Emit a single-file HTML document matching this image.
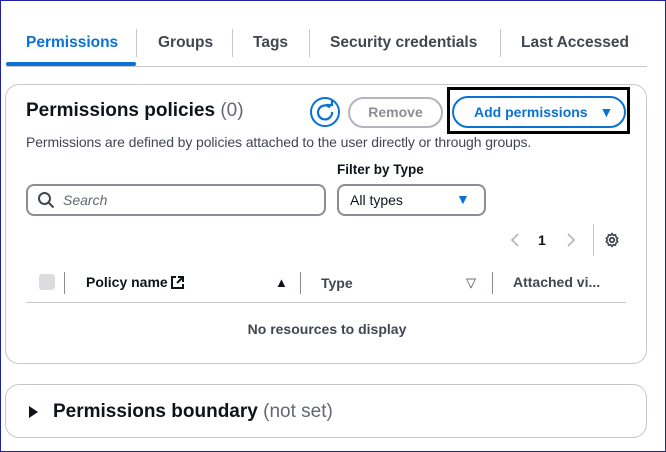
<!DOCTYPE html>
<html><head><style>
*{box-sizing:border-box;margin:0;padding:0}
body{width:666px;height:452px;position:relative;background:#fff;font-family:"Liberation Sans",sans-serif;color:#0f141a;overflow:hidden}
.a{position:absolute;white-space:nowrap}
.tab{font-size:15.5px;font-weight:bold;color:#424650;top:34px}
.sep{position:absolute;width:1px;background:#c6c6cd}
</style></head><body>
<div class="a" style="left:0;top:0;width:666px;height:452px;border:1px solid #2020a0"></div>
<div class="a tab" style="left:26px;color:#0972d3">Permissions</div>
<div class="a" style="left:6px;top:62px;width:130px;height:4px;background:#0972d3;border-radius:2px"></div>
<div class="sep" style="left:136px;top:29px;height:28px"></div>
<div class="a tab" style="left:158px">Groups</div>
<div class="sep" style="left:232px;top:29px;height:28px"></div>
<div class="a tab" style="left:253px">Tags</div>
<div class="sep" style="left:309px;top:29px;height:28px"></div>
<div class="a tab" style="left:330px">Security credentials</div>
<div class="sep" style="left:500px;top:29px;height:28px"></div>
<div class="a tab" style="left:521px">Last Accessed</div>
<div class="a" style="left:6px;top:66px;width:641px;height:1px;background:#c6c6cd"></div>

<div class="a" style="left:5px;top:84px;width:642px;height:280px;border:1px solid #c6c6cd;border-radius:14px"></div>
<div class="a" style="left:26px;top:100px;font-size:19px;font-weight:bold">Permissions policies <span style="font-weight:normal;color:#656871">(0)</span></div>
<svg class="a" style="left:309px;top:96px" width="32" height="32" viewBox="0 0 32 32"><circle cx="16" cy="16" r="14" fill="none" stroke="#0972d3" stroke-width="2"/><path d="M21 11.5A7 7 0 1 0 23 16" fill="none" stroke="#0972d3" stroke-width="2.2"/><path d="M17 9h6v-5" fill="none" stroke="#0972d3" stroke-width="2.2"/></svg>
<div class="a" style="left:348px;top:97px;width:95px;height:31px;border:2px solid #b4b4bb;border-radius:16px;font-size:14px;font-weight:bold;color:#8d8d94;text-align:center;line-height:27px">Remove</div>
<div class="a" style="left:447px;top:87px;width:183px;height:47px;border:3px solid #000"></div>
<div class="a" style="left:452px;top:96px;width:174px;height:32px;border:2px solid #0972d3;border-radius:16px;font-size:14px;font-weight:bold;color:#0972d3;line-height:28px;padding-left:20px">Add permissions <span style="font-size:14px;margin-left:8px">▼</span></div>
<div class="a" style="left:26px;top:134px;font-size:14px;color:#424650;letter-spacing:-0.1px">Permissions are defined by policies attached to the user directly or through groups.</div>

<div class="a" style="left:337px;top:162px;font-size:13.5px;font-weight:bold">Filter by Type</div>
<div class="a" style="left:26px;top:184px;width:300px;height:32px;border:2px solid #8c8c94;border-radius:8px"></div>
<svg class="a" style="left:37px;top:191px" width="18" height="18" viewBox="0 0 18 18"><circle cx="7.5" cy="7.5" r="5.5" fill="none" stroke="#424650" stroke-width="2"/><path d="M11.5 11.5l5 5" stroke="#424650" stroke-width="2"/></svg>
<div class="a" style="left:63px;top:192px;font-size:14px;font-style:italic;color:#656871">Search</div>
<div class="a" style="left:337px;top:184px;width:149px;height:32px;border:2px solid #8c8c94;border-radius:8px;font-size:14px;line-height:28px;padding-left:11px;color:#0f141a">All types</div>
<div class="a" style="left:456px;top:191px;font-size:14px;color:#0972d3">▼</div>

<svg class="a" style="left:509px;top:232px" width="12" height="16" viewBox="0 0 12 16"><path d="M9 2L3 8l6 6" fill="none" stroke="#b4b4bb" stroke-width="1.6"/></svg>
<div class="a" style="left:538px;top:232px;font-size:14px;font-weight:bold">1</div>
<svg class="a" style="left:565px;top:232px" width="12" height="16" viewBox="0 0 12 16"><path d="M3 2l6 6-6 6" fill="none" stroke="#b4b4bb" stroke-width="1.6"/></svg>
<div class="sep" style="left:593px;top:224px;height:32px"></div>
<svg class="a" style="left:604px;top:232px" width="16" height="16" viewBox="0 0 16 16"><circle cx="8" cy="8" r="2.2" fill="none" stroke="#424650" stroke-width="1.8"/><path d="M8 1.5l1.3 1.8 2.2-.5.5 2.2 1.8 1.3-1.3 1.7 1.3 1.7-1.8 1.3-.5 2.2-2.2-.5L8 14.5 6.7 12.7l-2.2.5-.5-2.2L2.2 9.7 3.5 8 2.2 6.3 4 5l.5-2.2 2.2.5z" fill="none" stroke="#424650" stroke-width="1.6" stroke-linejoin="round"/></svg>

<div class="a" style="left:39px;top:274px;width:16px;height:16px;background:#dcdce0;border-radius:3px"></div>
<div class="sep" style="left:64px;top:272px;height:22px;background:#8c8c94"></div>
<div class="a" style="left:86px;top:274px;font-size:14px;font-weight:bold">Policy name</div>
<svg class="a" style="left:170px;top:275px" width="15" height="15" viewBox="0 0 15 15"><path d="M6 2H2v11h11V9M8 2h5v5M13 2L7 8" fill="none" stroke="#0f141a" stroke-width="2"/></svg>
<div class="a" style="left:275px;top:275px;font-size:13px">▲</div>
<div class="sep" style="left:300px;top:272px;height:22px;background:#8c8c94"></div>
<div class="a" style="left:321px;top:275px;font-size:14px;color:#424650;font-weight:bold">Type</div>
<div class="a" style="left:466px;top:275px;font-size:13px;color:#424650">▽</div>
<div class="sep" style="left:492px;top:272px;height:22px;background:#8c8c94"></div>
<div class="a" style="left:513px;top:274px;font-size:14px;font-weight:bold;color:#424650">Attached vi...</div>
<div class="a" style="left:26px;top:302px;width:600px;height:1px;background:#c6c6cd"></div>
<div class="a" style="left:0;width:654px;text-align:center;top:321px;font-size:14px;font-weight:bold;color:#424650">No resources to display</div>

<div class="a" style="left:5px;top:384px;width:642px;height:54px;border:1px solid #c6c6cd;border-radius:14px"></div>
<div class="a" style="left:29px;top:406px;width:0;height:0;border-left:9px solid #0f141a;border-top:6px solid transparent;border-bottom:6px solid transparent"></div>
<div class="a" style="left:53px;top:401px;font-size:19px;font-weight:bold">Permissions boundary <span style="font-weight:normal;color:#656871">(not set)</span></div>
</body></html>
